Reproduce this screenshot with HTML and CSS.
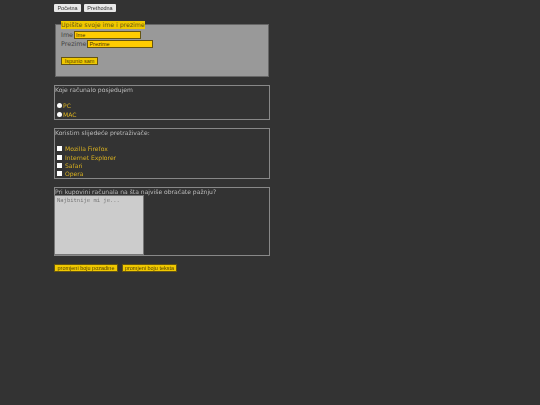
FILE: index.html
```html
<!DOCTYPE html>
<html lang="hr">

<head>
    <meta charset="UTF-8">
    <title>Anketa</title>
    <link rel="stylesheet" href="styles.css">
</head>

<body>
    <div class="nav">
        <button class="nav-btn">Početna</button>
        <button class="nav-btn">Prethodna</button>
    </div>

    <form>
        <fieldset class="name-box">
            <legend>Upišite svoje ime i prezime</legend>
            <div class="name-row">
                <label>Ime</label>
                <input class="name-input first" type="text" value="Ime">
            </div>
            <div class="name-row">
                <label>Prezime</label>
                <input class="name-input last" type="text" value="Prezime">
            </div>
            <button type="button" class="yellow-btn submit">Ispunio sam</button>
        </fieldset>

        <div class="box radio-box">
            <div class="box-title">Koje računalo posjedujem</div>
            <div class="options">
                <div class="radio-row"><span class="radio"></span>PC</div>
                <div class="radio-row"><span class="radio"></span>MAC</div>
            </div>
        </div>

        <div class="box check-box">
            <div class="box-title">Koristim slijedeće pretraživače:</div>
            <div class="options">
                <div class="check-row"><span class="check"></span>Mozilla Firefox</div>
                <div class="check-row"><span class="check"></span>Internet Explorer</div>
                <div class="check-row"><span class="check"></span>Safari</div>
                <div class="check-row"><span class="check"></span>Opera</div>
            </div>
        </div>

        <div class="box area-box">
            <div class="box-title">Pri kupovini računala na šta najviše obraćate pažnju?</div>
            <div class="area">Najbitnije mi je...</div>
        </div>

        <div class="actions">
            <button type="button" class="yellow-btn">promjeni boju pozadine</button>
            <button type="button" class="yellow-btn">promjeni boju teksta</button>
        </div>
    </form>
</body>

</html>
```

FILE: styles.css
```css
body {
    margin: 0;
    padding: 4px 0 0 54px;
    background-color: #333333;
    color: #bbbbbb;
    font-family: "DejaVu Sans", Verdana, sans-serif;
    font-size: 6.05px;
    overflow: hidden;
    filter: blur(0.25px);
}

button {
    padding: 0;
    cursor: pointer;
    font-family: "Liberation Sans", Arial, sans-serif;
    font-size: 5.5px;
}

.nav {
    display: flex;
    gap: 3px;
    height: 8px;
    margin-bottom: 12px;
}

.nav-btn {
    height: 8px;
    border: none;
    border-radius: 1px;
    background-color: #e8e8e8;
    color: #333333;
}

.nav-btn:first-child {
    width: 27px;
}

.nav-btn:last-child {
    width: 32px;
}

form {
    width: 216px;
}

.name-box {
    position: relative;
    box-sizing: border-box;
    width: 214px;
    height: 53px;
    margin: 0 0 8px 1px;
    padding: 5px 0 0 5px;
    background-color: #999999;
    border: 1px solid #666666;
    color: #444444;
}

.name-box legend {
    position: absolute;
    top: -4px;
    left: 5px;
    padding: 0;
    background-color: #f0c800;
    color: #665511;
    font-size: 6.2px;
    line-height: 8px;
}

.name-row {
    display: flex;
    align-items: center;
    gap: 1px;
    height: 9px;
    font-size: 6.4px;
}

.name-input {
    box-sizing: border-box;
    height: 8px;
    padding: 0 0 0 1px;
    border: 1px solid #665511;
    background-color: #ffcc00;
    color: #443300;
    font-family: "Liberation Sans", Arial, sans-serif;
    font-size: 5.5px;
}

.name-input.first {
    width: 67px;
}

.name-input.last {
    width: 66px;
}

.yellow-btn {
    box-sizing: border-box;
    height: 8px;
    border: 1px solid #665511;
    background-color: #f0c800;
    color: #554400;
}

.submit {
    width: 37px;
    margin-top: 9px;
}

.box {
    box-sizing: border-box;
    width: 216px;
    margin-bottom: 8px;
    border: 1px solid #888888;
}

.box-title {
    line-height: 8px;
}

.radio-box {
    height: 35px;
    padding-top: 0;
}

.check-box {
    height: 51px;
    padding-top: 0;
}

.area-box {
    height: 69px;
}

.options {
    margin-top: 7.5px;
    color: #d8b020;
}

.radio-row {
    display: flex;
    align-items: center;
    gap: 1px;
    height: 8.5px;
    padding-left: 2px;
}

.radio {
    width: 5px;
    height: 5px;
    border-radius: 50%;
    background-color: #ffffff;
}

.check-row {
    display: flex;
    align-items: center;
    gap: 3px;
    height: 8.4px;
    padding-left: 2px;
}

.check {
    width: 5px;
    height: 5px;
    background-color: #ffffff;
}

.area {
    box-sizing: border-box;
    width: 90px;
    height: 60px;
    margin: -1px 0 0 -1px;
    padding: 1px 2px;
    border: 1px solid #777777;
    background-color: #cccccc;
    color: #777777;
    font-family: "DejaVu Sans Mono", monospace;
    font-size: 5.5px;
}

.actions {
    display: flex;
    gap: 4px;
}

.actions .yellow-btn:first-child {
    width: 64px;
}

.actions .yellow-btn:last-child {
    width: 55px;
}
```
